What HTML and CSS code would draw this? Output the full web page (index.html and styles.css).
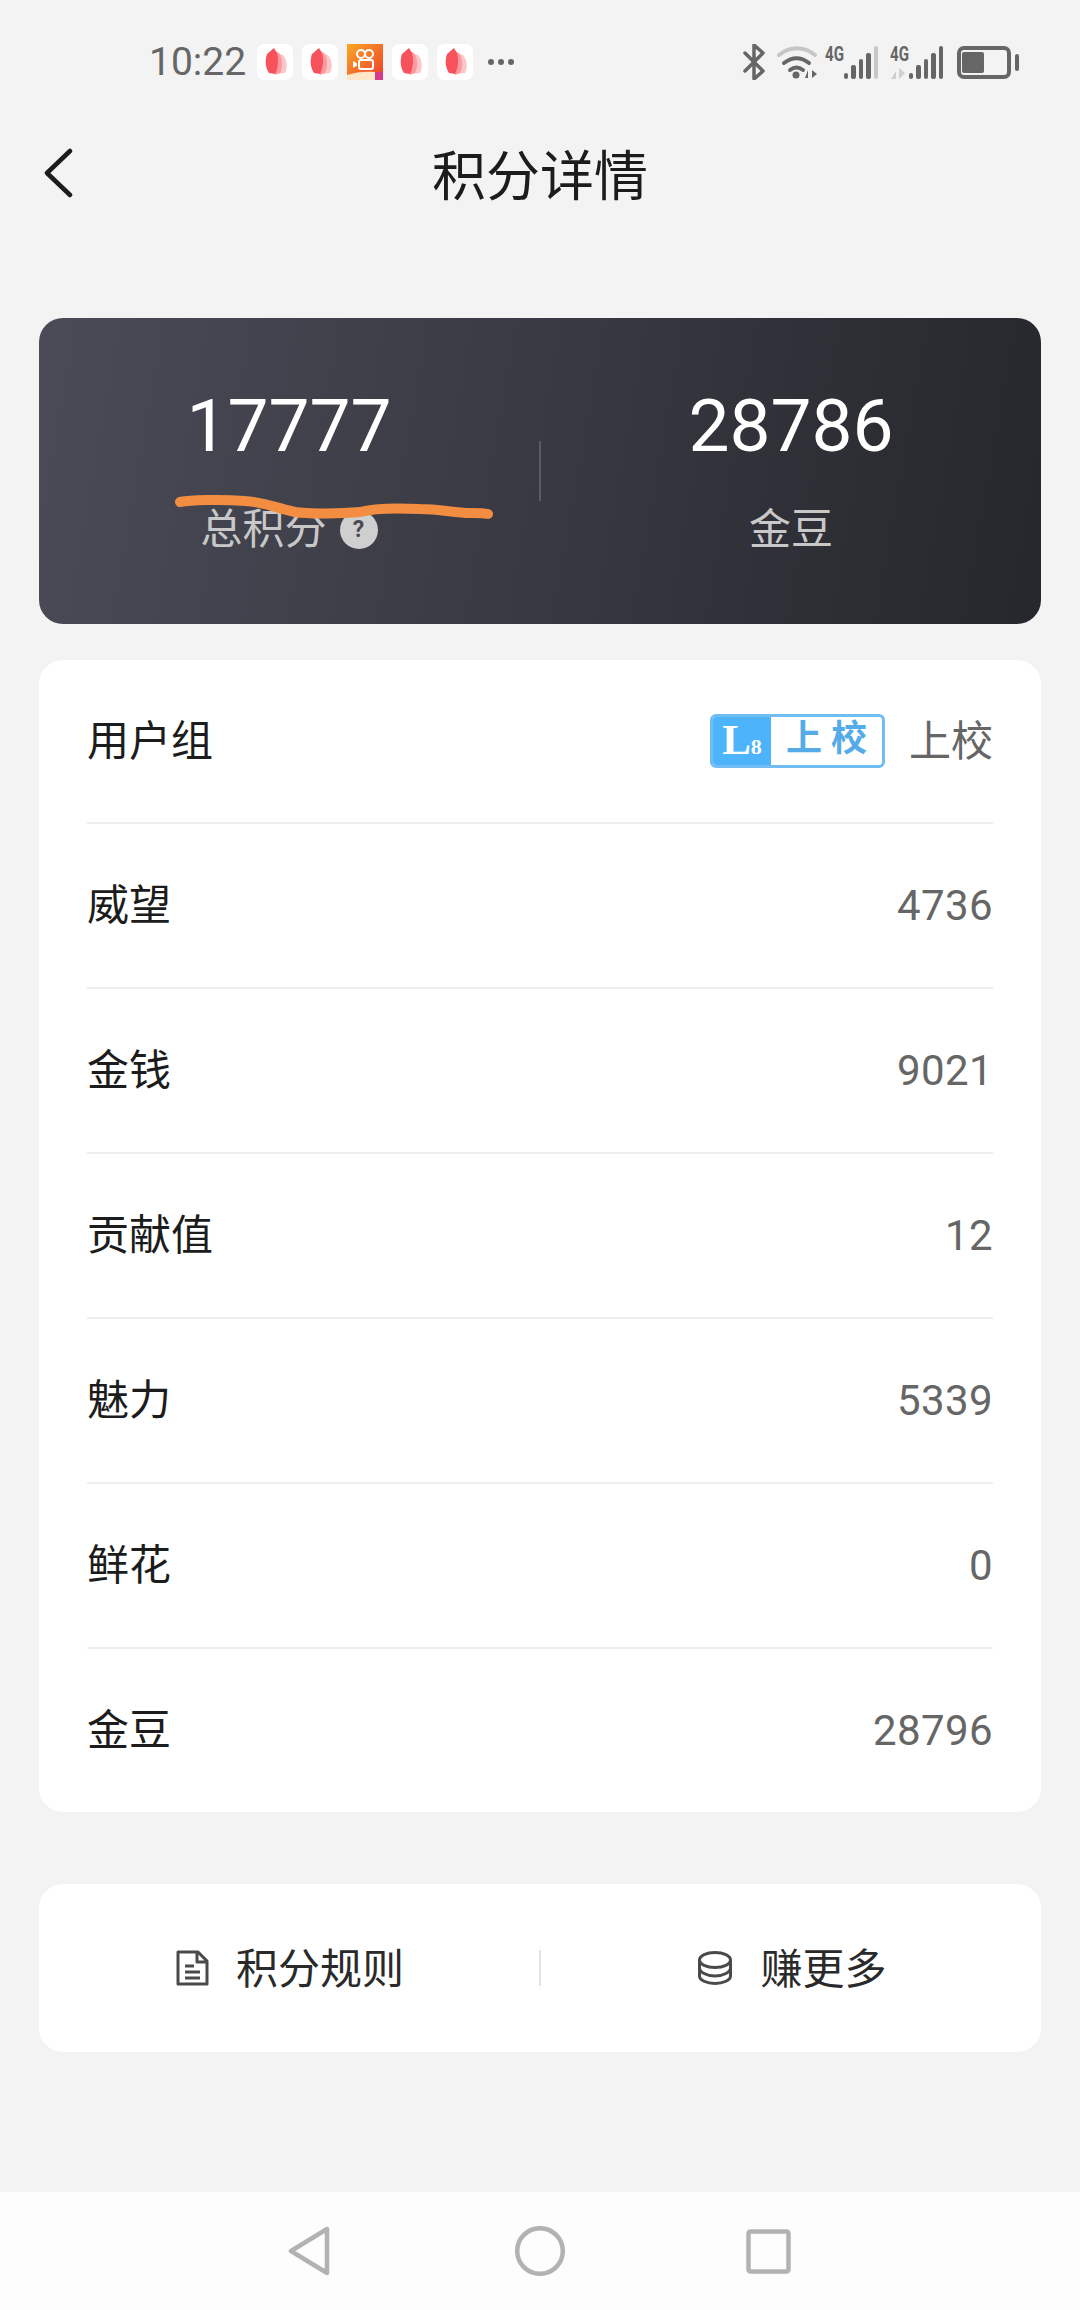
FILE: index.html
```html
<!DOCTYPE html>
<html>
<head lang="en">
    <meta charset="UTF-8">
    <title>积分详情</title>
    <link rel="stylesheet" href="styles.css">
</head>
<body>
<svg class="defs" width="0" height="0">
    <symbol id="book" viewBox="0 0 36 36">
        <rect width="36" height="36" rx="7" fill="#fff"/>
        <path d="M20 9l6 2c4 5 5 12 2 18l-8 1z" fill="#fcc6c8"/>
        <path d="M18 7l4 2c4 6 4 14 1 20l-5 2z" fill="#fa9a9e"/>
        <path d="M10 10l7-6 3 5c2 7 1 15-2 21l-6-1c-4-6-4-13-2-19z" fill="#f7525c"/>
    </symbol>
</svg>

<div class="status">
    <span class="time">10:22</span>
    <div class="apps">
        <svg class="app"><use href="#book"/></svg>
        <svg class="app"><use href="#book"/></svg>
        <div class="app kuaishou">
            <svg viewBox="0 0 36 36" width="36" height="36">
                <circle cx="14" cy="10" r="4" fill="none" stroke="#fff" stroke-width="2"/>
                <circle cx="22" cy="10" r="4" fill="none" stroke="#fff" stroke-width="2"/>
                <rect x="12" y="16" width="14" height="9" rx="2" fill="none" stroke="#fff" stroke-width="2"/>
                <path d="M6 17l4 2.500v2l-4 2.500z" fill="#fff"/>
                <path d="M0 31c8-3 20-4 28-3v8H0z" fill="#fde7c8"/>
                <rect x="28" y="28" width="8" height="8" fill="#d63a8c"/>
            </svg>
        </div>
        <svg class="app"><use href="#book"/></svg>
        <svg class="app"><use href="#book"/></svg>
    </div>
    <div class="more"><i></i><i></i><i></i></div>
    <div class="sys">
        <svg class="bt" width="22" height="36" viewBox="0 0 22 36">
            <path d="M2 9l18 18-9 8V1l9 8L2 27" fill="none" stroke="#666" stroke-width="3.500" stroke-linejoin="round" stroke-linecap="round"/>
        </svg>
        <svg class="wifi" width="42" height="34" viewBox="0 0 42 34">
            <path d="M2 10c11-9 25-9 36 0" fill="none" stroke="#c6c6c6" stroke-width="4" stroke-linecap="round"/>
            <path d="M7 18c8-6 17-6 25 0M13 25c4-3 9-3 13 0" fill="none" stroke="#666" stroke-width="4" stroke-linecap="round"/>
            <circle cx="19" cy="30" r="3.500" fill="#666"/>
            <path d="M28 33l3-8v8zM35 25l5 4-5 4z" fill="#666"/>
        </svg>
        <div class="net">
            <span class="g">4G</span>
            <div class="bars"><i class="b1"></i><i class="b2"></i><i class="b3"></i><i class="b4"></i><i class="b5 off"></i></div>
        </div>
        <div class="net">
            <span class="g">4G</span>
            <svg class="arrows" width="16" height="11" viewBox="0 0 16 11"><path d="M1 11l5-8v8zM9 0l6 5-6 6z" fill="#d0d0d0"/></svg>
            <div class="bars"><i class="b1"></i><i class="b2"></i><i class="b3"></i><i class="b4"></i><i class="b5"></i></div>
        </div>
        <div class="batt"><div class="cell"><i></i></div><b></b></div>
    </div>
</div>

<div class="head">
    <svg class="back" width="32" height="50" viewBox="0 0 32 50"><path d="M28 3L5 25l23 22" fill="none" stroke="#1c1c1c" stroke-width="4.500" stroke-linecap="round" stroke-linejoin="round"/></svg>
    <h1>积分详情</h1>
</div>

<div class="hero">
    <div class="stat">
        <div class="num">17777</div>
        <div class="lbl">总积分<span class="q">?</span></div>
    </div>
    <div class="vline"></div>
    <div class="stat">
        <div class="num">28786</div>
        <div class="lbl">金豆</div>
    </div>
    <svg class="scribble" width="330" height="40" viewBox="0 0 330 40">
        <path d="M8 9c10-2 40-3 65-1 20 1 30 7 50 11 20 3 45 1 65 0 14-4 40-4 60-3 20 0 35 4 50 4 8 0 14 0 18 1" fill="none" stroke="#f28d42" stroke-width="10" stroke-linecap="round"/>
    </svg>
</div>

<div class="list">
    <div class="row">
        <span class="k">用户组</span>
        <div class="rank">
            <div class="badge"><span class="lv">L<small>8</small></span><span class="bn">上 校</span></div>
            <span class="v cjk">上校</span>
        </div>
    </div>
    <div class="row"><span class="k">威望</span><span class="v">4736</span></div>
    <div class="row"><span class="k">金钱</span><span class="v">9021</span></div>
    <div class="row"><span class="k">贡献值</span><span class="v">12</span></div>
    <div class="row"><span class="k">魅力</span><span class="v">5339</span></div>
    <div class="row"><span class="k">鲜花</span><span class="v">0</span></div>
    <div class="row"><span class="k">金豆</span><span class="v">28796</span></div>
</div>

<div class="actions">
    <div class="act">
        <svg width="33" height="36" viewBox="0 0 33 36"><path d="M2 2h20l9 9v23H2zM21 2v10h10M9 16h9M9 22h15M9 28h15" fill="none" stroke="#4a4a4a" stroke-width="3" stroke-linejoin="round"/></svg>
        <span>积分规则</span>
    </div>
    <div class="sep"></div>
    <div class="act">
        <svg width="36" height="34" viewBox="0 0 36 34"><g fill="none" stroke="#4a4a4a" stroke-width="3"><ellipse cx="18" cy="9" rx="15.500" ry="7.500"/><path d="M2.500 9v8c0 4 7 8 15.500 8s15.500-4 15.500-8V9M2.500 17v8c0 4 7 7.500 15.500 7.500s15.500-3.500 15.500-7.500v-8"/></g></svg>
        <span>赚更多</span>
    </div>
</div>

<div class="nav">
    <svg width="42" height="50" viewBox="0 0 42 50"><path d="M39 3v44L3 25z" fill="none" stroke="#b2b2b2" stroke-width="4.500" stroke-linejoin="round"/></svg>
    <svg class="home" width="50" height="50" viewBox="0 0 50 50"><circle cx="25" cy="25" r="22.800" fill="none" stroke="#b2b2b2" stroke-width="4.500"/></svg>
    <svg class="task" width="45" height="45" viewBox="0 0 45 45"><rect x="2.500" y="2.500" width="40" height="40" rx="2" fill="none" stroke="#b2b2b2" stroke-width="4.500"/></svg>
</div>
</body>
</html>
```

FILE: styles.css
```css
*{
    padding: 0;
    margin: 0;
    box-sizing: border-box;
}
body{
    width: 1080px;
    height: 2310px;
    background: #f3f3f3;
    font-family: Roboto, "Noto Sans CJK SC", sans-serif;
    display: flex;
    flex-direction: column;
    overflow: hidden;
}
.defs{
    position: absolute;
}
.status{
    height: 92px;
    padding: 32px 61px 0 149px;
    display: flex;
    align-items: center;
    color: #666;
}
.time{
    font-size: 39px;
    width: 108px;
}
.apps{
    display: flex;
    gap: 9px;
}
.app{
    width: 36px;
    height: 36px;
    display: block;
}
.kuaishou{
    background: linear-gradient(135deg, #f9a825, #ee3b2c);
}
.more{
    display: flex;
    gap: 4px;
    margin-left: 15px;
}
.more i{
    width: 6px;
    height: 6px;
    border-radius: 50%;
    background: #666;
}
.sys{
    margin-left: auto;
    display: flex;
    align-items: center;
}
.wifi{
    margin-left: 12px;
}
.net{
    width: 53px;
    height: 33px;
    margin-left: 12px;
    display: flex;
    align-items: flex-end;
    position: relative;
}
.wifi + .net{
    margin-left: 6px;
}
.g{
    position: absolute;
    left: 0;
    top: -4px;
    font-size: 21px;
    font-weight: 700;
    color: #666;
    transform: scaleX(.72);
    transform-origin: left;
}
.arrows{
    position: absolute;
    left: 0;
    bottom: 0;
}
.bars{
    margin-left: auto;
    display: flex;
    align-items: flex-end;
    gap: 3px;
}
.bars i{
    width: 4.400px;
    background: #666;
    border-radius: 2px;
}
.bars .b1{ height: 6px; }
.bars .b2{ height: 14px; }
.bars .b3{ height: 20px; }
.bars .b4{ height: 26px; }
.bars .b5{ height: 33px; }
.bars .off{ background: #c8c8c8; }
.batt{
    display: flex;
    align-items: center;
    gap: 4px;
    margin-left: 14px;
}
.cell{
    width: 54px;
    height: 33px;
    border: 4px solid #666;
    border-radius: 7px;
    padding: 2px 1px;
}
.cell i{
    display: block;
    width: 22px;
    height: 21px;
    background: #666;
    border-radius: 2px;
}
.batt b{
    width: 4px;
    height: 17px;
    background: #666;
    border-radius: 2px;
}
.head{
    height: 110px;
    margin-top: 28px;
    position: relative;
    display: flex;
    align-items: center;
    justify-content: center;
}
.back{
    position: absolute;
    left: 42px;
    top: 28px;
}
h1{
    font-size: 54px;
    font-weight: 400;
    color: #1c1c1c;
    padding-bottom: 6px;
}
.hero{
    width: 1002px;
    height: 306px;
    margin: 88px 0 0 39px;
    border-radius: 24px;
    background: linear-gradient(100deg, #4a4b57, #26272c);
    display: flex;
    align-items: center;
    position: relative;
}
.stat{
    flex: 1;
    text-align: center;
}
.num{
    font-size: 73px;
    line-height: 84px;
    color: #fff;
}
.lbl{
    margin-top: 34px;
    font-size: 42px;
    line-height: 56px;
    color: #c8c8c8;
    display: flex;
    justify-content: center;
    align-items: center;
}
.q{
    width: 38px;
    height: 38px;
    margin-left: 13px;
    border-radius: 50%;
    background: #cfcfcf;
    color: #4a4a52;
    font-size: 23px;
    line-height: 38px;
    font-weight: 700;
}
.vline{
    width: 2px;
    height: 60px;
    background: #5a5b64;
}
.scribble{
    position: absolute;
    left: 133px;
    top: 175px;
}
.list{
    width: 1002px;
    margin: 36px 0 0 39px;
    padding: 0 48px;
    background: #fff;
    border-radius: 24px;
}
.row{
    height: 165px;
    display: flex;
    align-items: center;
    justify-content: space-between;
    border-bottom: 2px solid #eee;
}
.row:first-child{
    height: 164px;
}
.row:last-child{
    border-bottom: 0;
    height: 163px;
}
.k{
    font-size: 42px;
    color: #1c1c1c;
    padding-bottom: 8px;
}
.v{
    font-size: 42px;
    color: #666;
    letter-spacing: .4px;
}
.cjk{
    padding-bottom: 8px;
    letter-spacing: 0;
}
.rank{
    display: flex;
    align-items: center;
    gap: 24px;
}
.badge{
    width: 175px;
    height: 54px;
    display: flex;
    border: 3px solid #6fbdf3;
    border-radius: 6px;
    overflow: hidden;
}
.lv{
    width: 58px;
    background: #4db4fb;
    color: #fff;
    font-family: "Liberation Serif", serif;
    font-weight: 700;
    font-size: 43px;
    line-height: 46px;
    text-align: center;
}
.lv small{
    font-size: 22px;
}
.bn{
    flex: 1;
    text-align: center;
    color: #55abe8;
    font-size: 36px;
    line-height: 44px;
    font-weight: 700;
}
.actions{
    width: 1002px;
    height: 168px;
    margin: 72px 0 0 39px;
    background: #fff;
    border-radius: 24px;
    display: flex;
    align-items: center;
}
.act{
    flex: 1;
    display: flex;
    align-items: center;
    justify-content: center;
    gap: 27px;
    padding-left: 2px;
    font-size: 42px;
    color: #2a2a2a;
}
.act span{
    padding-bottom: 5px;
}
.sep{
    width: 2px;
    height: 36px;
    background: #e2e2e2;
}
.nav{
    margin-top: auto;
    height: 118px;
    padding-left: 288px;
    background: #fdfdfd;
    display: flex;
    align-items: center;
}
.home{
    margin-left: 185px;
}
.task{
    margin-left: 181px;
}
```
